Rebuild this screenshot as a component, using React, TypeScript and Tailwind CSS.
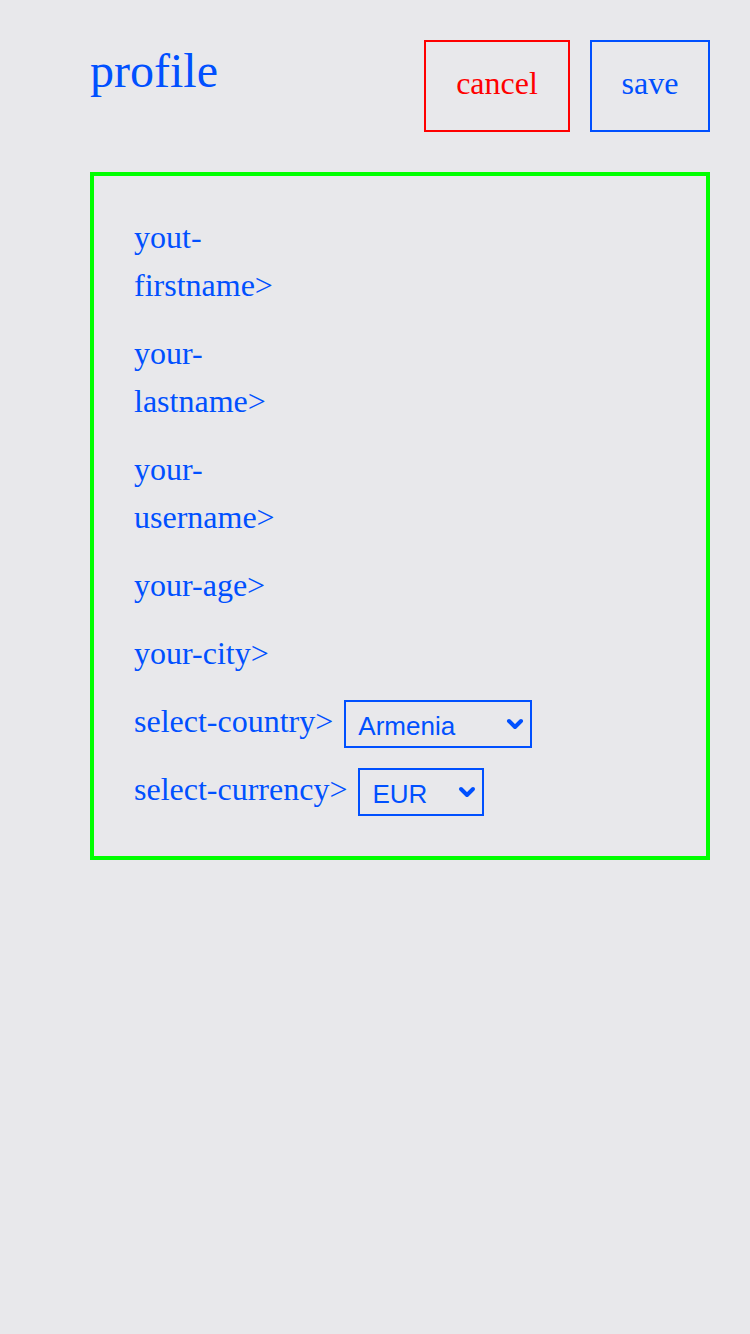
import React from "react";

const serif = { fontFamily: '"Liberation Serif", "Times New Roman", serif' };
const sans = { fontFamily: '"Liberation Sans", Arial, sans-serif' };

function Chevron() {
  return (
    <svg width="18" height="12" viewBox="0 0 18 12" className="pointer-events-none absolute right-[8px] top-[18px]">
      <path d="M3 3 L9 9 L15 3" fill="none" stroke="#0050ff" strokeWidth="4" strokeLinecap="round" strokeLinejoin="round" />
    </svg>
  );
}

function Select({ value, options, width }: { value: string; options: string[]; width: string }) {
  return (
    <div className={`relative ${width} h-[48px] mt-[3px] shrink-0`}>
      <select
        defaultValue={value}
        style={sans}
        className="w-full h-full appearance-none bg-transparent border-2 border-[#0050ff] text-[#0050ff] text-[26px] pl-[12px] pr-[30px] outline-none"
      >
        {options.map((o) => (
          <option key={o}>{o}</option>
        ))}
      </select>
      <Chevron />
    </div>
  );
}

export default function App() {
  return (
    <div className="min-h-[1334px] w-[750px] bg-[#e8e8eb] pl-[90px] pr-[40px] pt-[40px]" style={serif}>
      <div className="flex items-start justify-between">
        <div className="mt-[7px] text-[48px] leading-[48px] text-[#0050ff]">profile</div>
        <div className="flex gap-[20px]">
          <button className="w-[146px] h-[92px] border-2 border-[#ff0000] text-[#ff0000] text-[32px] leading-[48px] flex items-center justify-center pb-[6px]">
            cancel
          </button>
          <button className="w-[120px] h-[92px] border-2 border-[#0050ff] text-[#0050ff] text-[32px] leading-[48px] flex items-center justify-center pb-[6px]">
            save
          </button>
        </div>
      </div>

      <div className="mt-[40px] border-4 border-[#00ff00] pl-[40px] pt-[37px] pb-[43px] text-[32px] leading-[48px] text-[#0050ff] flex flex-col gap-[20px]">
        <div>
          yout-
          <br />
          firstname&gt;
        </div>
        <div>
          your-
          <br />
          lastname&gt;
        </div>
        <div>
          your-
          <br />
          username&gt;
        </div>
        <div>your-age&gt;</div>
        <div>your-city&gt;</div>
        <div className="flex items-start gap-[11px] h-[48px]">
          <span>select-country&gt;</span>
          <Select value="Armenia" options={["Armenia", "France", "Germany", "Italy"]} width="w-[188px]" />
        </div>
        <div className="flex items-start gap-[11px] h-[48px]">
          <span>select-currency&gt;</span>
          <Select value="EUR" options={["EUR", "USD", "AMD"]} width="w-[126px]" />
        </div>
      </div>
    </div>
  );
}
